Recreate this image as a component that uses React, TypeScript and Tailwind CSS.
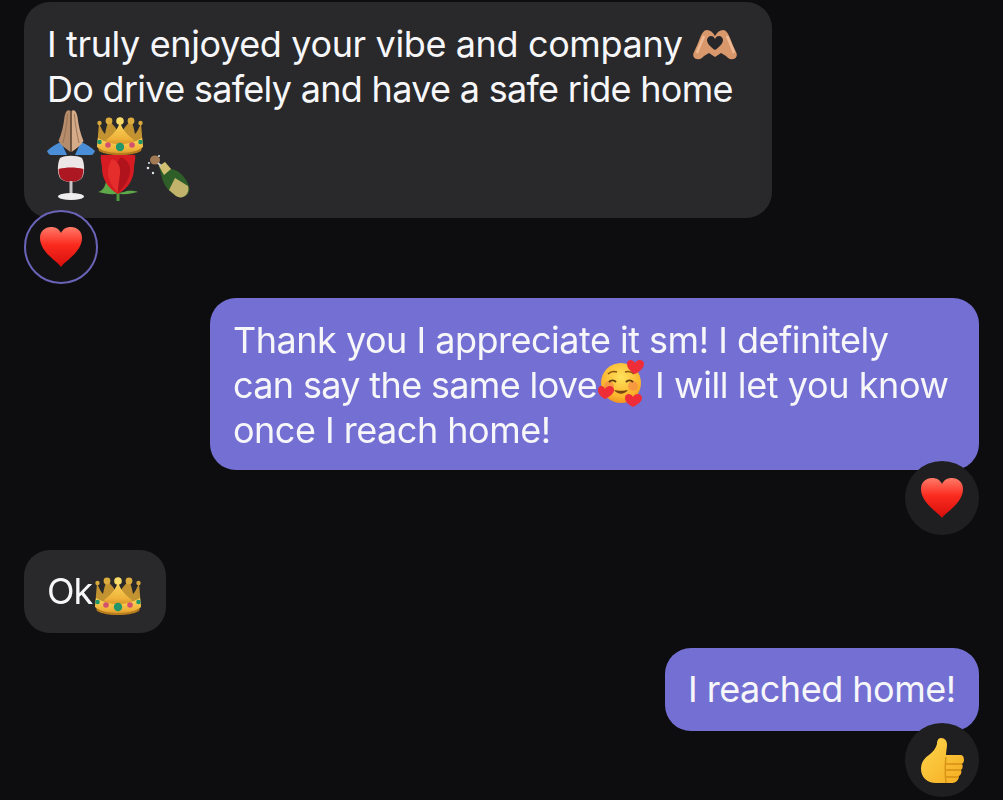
const Heart = ({ id }: { id: string }) => (
  <svg width="42" height="40" viewBox="0 0 42 40">
    <defs>
      <linearGradient id={id} x1="0" y1="0" x2="0" y2="1">
        <stop offset="0" stopColor="#ff7a68" />
        <stop offset="0.45" stopColor="#fb2a1e" />
        <stop offset="1" stopColor="#d60f0c" />
      </linearGradient>
    </defs>
    <path
      d="M21 40C17 34 0 25 0 11 0 4 5 0 11 0c5 0 8 2 10 6 2-4 5-6 10-6 6 0 11 4 11 11 0 14-17 23-21 29Z"
      fill={`url(#${id})`}
    />
  </svg>
);

const Crown = ({ id }: { id: string }) => (
  <svg width="46" height="39" viewBox="0 0 46 39" className="shrink-0">
    <defs>
      <linearGradient id={id} x1="0" y1="0" x2="0" y2="1">
        <stop offset="0" stopColor="#fcd95e" />
        <stop offset="0.7" stopColor="#efb139" />
        <stop offset="1" stopColor="#cf8b22" />
      </linearGradient>
    </defs>
    <path d="M2 7c2 5 4 9 6 11 1-5 2-10 4-13 3 2 6 6 8 9h6c2-3 5-7 8-9 2 3 3 8 4 13 2-2 4-6 6-11l2 24H0Z" fill="#c39231" />
    <path d="M23 6c2 7 7 13 14 18l-3 6H12l-3-6C16 19 21 13 23 6Z" fill={`url(#${id})`} />
    <path d="M1 22c7 4 14 6 22 6s15-2 22-6l1 9c-5 5-14 8-23 8S5 36 0 31Z" fill={`url(#${id})`} />
    <path d="M1 32c6 4 14 5 22 5s16-1 22-5l-1 3c-5 3-13 4-21 4S7 38 2 35Z" fill="#b67c1d" />
    <circle cx="2.500" cy="7" r="2.200" fill="#d9a83c" />
    <circle cx="12" cy="5" r="3.400" fill="#dcab3e" />
    <circle cx="23" cy="5" r="3.800" fill="#f8dc6a" />
    <circle cx="34" cy="5" r="3.400" fill="#dcab3e" />
    <circle cx="43.500" cy="7" r="2.200" fill="#d9a83c" />
    <circle cx="23" cy="31" r="4.200" fill="#20966a" />
    <circle cx="11" cy="29" r="2.800" fill="#d4506e" />
    <circle cx="35" cy="29" r="2.800" fill="#d4506e" />
    <circle cx="2.500" cy="26" r="2.300" fill="#20966a" />
    <circle cx="43.500" cy="26" r="2.300" fill="#20966a" />
  </svg>
);

const HandsHeart = () => (
  <svg width="45" height="30" viewBox="0 0 45 30" className="shrink-0">
    <path
      d="M22 6C20 2 17 0 14 0 11 0 9 3 7 8 5 13 3 18 1 22c-2 4 0 7 3 7 3 1 5-1 7-3l5-3 6 4 6-4 5 3c2 2 4 4 7 3 3 0 5-3 3-7-2-4-4-9-6-14-2-5-4-8-7-8-3 0-6 2-8 6Z"
      fill="#d9976c"
    />
    <path d="M22 20c-3-2-8-6-8-10 0-2 2-4 4-4s3 1 4 3c1-2 2-3 4-3s4 2 4 4c0 4-5 8-8 10Z" fill="#27272a" />
    <path d="M11 6C9 11 6 17 4 23M34 6c2 5 5 11 7 17" stroke="#efba94" strokeWidth="2.500" fill="none" />
  </svg>
);

const Pray = () => (
  <svg width="48" height="45" viewBox="0 0 48 45" className="shrink-0">
    <path d="M0 41C4 37 9 34 14 32L20 45H4c-2 0-3-2-4-4Z" fill="#4a8ed8" />
    <path d="M48 41C44 37 39 34 34 32L28 45H44c2 0 3-2 4-4Z" fill="#4a8ed8" />
    <path d="M23.500 1c-3-2-5 1-6 6-1 9-3 17-6 24 3 5 8 8 12 11Z" fill="#b58c6c" />
    <path d="M24.500 1c3-2 5 1 6 6 1 9 3 17 6 24-3 5-8 8-12 11Z" fill="#d6ab8a" />
    <path d="M20.500 4C20 14 18 24 16 33M27.500 4C28 14 30 24 32 33" stroke="#8f6b4d" strokeWidth="0.800" fill="none" />
    <path d="M24 1v41" stroke="#6e5038" strokeWidth="1.200" />
  </svg>
);

const Wine = () => (
  <svg width="28" height="45" viewBox="0 0 28 45" className="shrink-0">
    <path d="M3 3C8 0 20 0 25 3c3 6 3 17-1 21-5 4-15 4-20 0C0 20 0 9 3 3Z" fill="#ece6e6" />
    <path d="M1.500 14c8-2 17-2 25 0 0 4-1 8-3 10-5 4-14 4-19 0-2-2-3-6-3-10Z" fill="#ac1722" />
    <path d="M12.500 26h3v14h-3Z" fill="#c9c3c3" />
    <ellipse cx="14" cy="41.500" rx="13" ry="3.500" fill="#efeded" />
  </svg>
);

const Rose = () => (
  <svg width="40" height="46" viewBox="0 0 40 46" className="shrink-0">
    <path d="M18.500 34v12h3V34Z" fill="#4c9a3c" />
    <path d="M20 38C14 41 7 38 0 37c5-1 7-6 8-10 3 4 8 8 12 11Zm0 0c6 3 13 0 20-1-7-2-11-1-14 0Z" fill="#5fa84a" />
    <path d="M3 0h34c1 5-1 8-1 13 0 10-5 20-16 26C9 33 4 23 4 13 4 8 2 5 3 0Z" fill="#d61c22" />
    <path d="M23 2c7 3 10 9 9 15-1 8-6 15-12 21-3-5-5-11-5-17 0-7 4-14 8-19Z" fill="#b0131c" />
    <path d="M14 4c6 2 9 8 8 15-1 7-2 12-2 19-5-5-10-12-10-21 0-5 2-10 4-13Z" fill="#e52d2c" />
  </svg>
);

const Champagne = () => (
  <svg width="44" height="44" viewBox="0 0 44 44" className="shrink-0">
    <path d="M13 11 19 7 25 14c7 1 13 6 17 15 2 4 2 8-1 11-3 3-7 3-11 1-8-5-12-11-14-18Z" fill="#2f5f28" />
    <path d="M29 23 42 31c1 4 0 7-2 9-3 3-7 3-10 1l-7-6Z" fill="#c2b36c" />
    <path d="M13 11 19 7 25 14 18 20Z" fill="#d3bf72" />
    <ellipse cx="9" cy="5" rx="5" ry="4.500" fill="#a07a54" />
    <path d="M12 8 15 11" stroke="#c9c9c9" strokeWidth="2" />
    <circle cx="2" cy="13" r="1.300" fill="#dfe6ea" />
    <circle cx="7" cy="18" r="1.200" fill="#dfe6ea" />
    <circle cx="3" cy="8" r="1" fill="#dfe6ea" />
    <circle cx="13" cy="1" r="1" fill="#dfe6ea" />
  </svg>
);

const SmilingHearts = () => (
  <svg width="48" height="48" viewBox="0 0 48 48" className="shrink-0 -my-[3px] -translate-y-[3px]">
    <defs>
      <radialGradient id="smile-face" cx="0.5" cy="0.35" r="0.7">
        <stop offset="0" stopColor="#ffe25c" />
        <stop offset="0.7" stopColor="#fbb52d" />
        <stop offset="1" stopColor="#ef8a1e" />
      </radialGradient>
    </defs>
    <circle cx="24" cy="24" r="20" fill="url(#smile-face)" />
    <circle cx="12" cy="27" r="5" fill="#f58a45" opacity="0.7" />
    <circle cx="36" cy="27" r="5" fill="#f58a45" opacity="0.7" />
    <path d="M11 15c3-3 6-3 9-2M28 13c3-1 6-1 9 2" stroke="#8a5212" strokeWidth="1.500" fill="none" />
    <path d="M12 23c2-2 5-2 7 0M29 23c2-2 5-2 7 0" stroke="#5f3a10" strokeWidth="2" fill="none" />
    <path d="M17 31c4 5 10 5 14 0-4 1-10 1-14 0Z" fill="#7b4413" />
    <path d="M38 15c-4-2-8-6-8-10 0-4 5-6 8-1 3-5 9-3 9 1 0 4-5 8-9 10Z" fill="#ef2d38" />
    <path d="M8 40c-4-2-7-5-7-9 0-4 5-6 7-1 3-5 9-3 9 1 0 4-5 7-9 9Z" fill="#ef2d38" />
    <path d="M36 48c-4-2-8-5-8-9 0-4 5-6 8-1 3-5 9-3 9 1 0 4-5 7-9 9Z" fill="#ef2d38" />
  </svg>
);

const ThumbsUp = () => (
  <svg width="43" height="45" viewBox="0 0 43 45">
    <defs>
      <linearGradient id="thumb-fill" x1="0" y1="0" x2="1" y2="1">
        <stop offset="0" stopColor="#ffd64c" />
        <stop offset="1" stopColor="#f4ab20" />
      </linearGradient>
    </defs>
    <path
      d="M20 0c4 0 6 3 6 7 0 3-1 6-1 10-4 0-3 0-1 0h15c3 0 4 2 4 5 0 2-1 3-2 4 1 1 1 5-1 6 1 2 0 5-2 6 0 3-2 6-6 7H15C6 45 0 39 0 31c0-6 3-11 8-14 4-3 7-7 8-11 0-3 1-6 4-6Z"
      fill="url(#thumb-fill)"
    />
    <path d="M25 19c-1 8-1 17 0 26" stroke="#d89618" strokeWidth="1.500" fill="none" />
    <path d="M25 26h16M25 32h15M25 39h13" stroke="#d68f15" strokeWidth="1.500" />
  </svg>
);

const bubbleText = "text-[36px] leading-[45px] tracking-[-0.5px] text-[#f7f7fa]";

export default function App() {
  return (
    <div className="w-[1003px] h-[800px] overflow-hidden bg-[#0d0d0f]">
      <div
        className="h-full flex flex-col px-6 pt-[2px] blur-[0.4px]"
        style={{ fontFamily: '"Inter", "Liberation Sans", sans-serif' }}
      >
        <div className={`w-[748px] h-[216px] shrink-0 rounded-[26px] bg-[#29292b] pl-[23px] pt-5 ${bubbleText}`}>
          <div className="flex items-center whitespace-nowrap tracking-[-0.37px]">
            I truly enjoyed your vibe and company
            <span className="ml-[10px]">
              <HandsHeart />
            </span>
          </div>
          <div className="whitespace-nowrap tracking-[-0.7px]">Do drive safely and have a safe ride home</div>
          <div className="flex items-end -mt-[2px]">
            <Pray />
            <span className="ml-[2px]">
              <Crown id="crown-a" />
            </span>
          </div>
          <div className="flex items-start">
            <span className="ml-[10px] mr-[13px]">
              <Wine />
            </span>
            <Rose />
            <span className="ml-2">
              <Champagne />
            </span>
          </div>
        </div>

        <div className="relative z-10 -mt-2 shrink-0 w-[74px] h-[74px] rounded-full bg-[#131316] border-2 border-[#6a64b8] flex items-center justify-center">
          <Heart id="heart-a" />
        </div>

        <div className={`self-end mt-[14px] w-[769px] h-[172px] shrink-0 rounded-[26px] bg-[#7470d3] pl-[23px] pt-5 ${bubbleText}`}>
          <div className="whitespace-nowrap">Thank you I appreciate it sm! I definitely</div>
          <div className="flex items-center whitespace-nowrap">
            <span className="tracking-[-0.65px]">can say the same love</span>
            <SmilingHearts />
            <span className="ml-[10px] tracking-[-0.4px]">I will let you know</span>
          </div>
          <div className="whitespace-nowrap">once I reach home!</div>
        </div>

        <div className="relative z-10 self-end -mt-[9px] shrink-0 w-[74px] h-[74px] rounded-full bg-[#1f1f21] flex items-center justify-center">
          <Heart id="heart-b" />
        </div>

        <div className={`mt-[15px] w-[142px] h-[83px] shrink-0 rounded-[26px] bg-[#29292b] pl-[23px] flex items-center tracking-[-1px] ${bubbleText}`}>
          Ok
          <span className="mt-2 ml-[3px]">
            <Crown id="crown-b" />
          </span>
        </div>

        <div className={`self-end mt-[15px] w-[314px] h-[83px] shrink-0 rounded-[26px] bg-[#7470d3] pl-[23px] flex items-center whitespace-nowrap ${bubbleText}`}>
          I reached home!
        </div>

        <div className="relative z-10 self-end -mt-2 shrink-0 w-[74px] h-[74px] rounded-full bg-[#1f1f21] flex items-center justify-center">
          <ThumbsUp />
        </div>
      </div>
    </div>
  );
}
